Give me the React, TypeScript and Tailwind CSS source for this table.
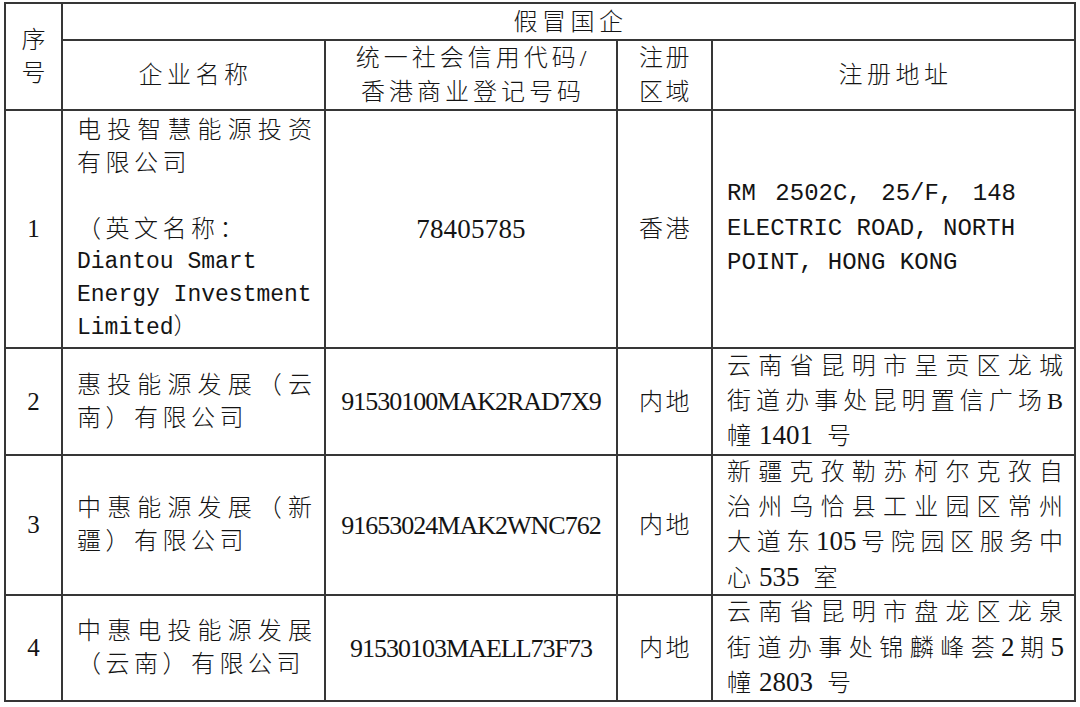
import React from "react";

const serif = "[font-family:'Liberation_Serif','Noto_Sans_CJK_SC',serif]";
const mono = "[font-family:'Liberation_Mono','Noto_Sans_CJK_SC',monospace]";
const cell = "border-r-2 border-b-2 border-[#363636]";
const J = "text-justify [text-align-last:justify]";

function D({ children }: { children: React.ReactNode }) {
  return <span className="text-[27px] tracking-normal">{children}</span>;
}

function NameCell({ children }: { children: React.ReactNode }) {
  return (
    <div className={`${cell} pl-[14px] pr-[12px] flex flex-col justify-center leading-[33px] text-[24px]`}>
      {children}
    </div>
  );
}

function AddrCell({ children }: { children: React.ReactNode }) {
  return (
    <div className={`${cell} pl-[14px] pr-[10px] flex flex-col justify-center leading-[34.5px] text-[24px] tracking-[1px]`}>
      {children}
    </div>
  );
}

function Center({ children, extra = "" }: { children: React.ReactNode; extra?: string }) {
  return (
    <div className={`${cell} flex flex-col items-center justify-center text-center ${extra}`}>
      {children}
    </div>
  );
}

export default function App() {
  return (
    <div className={`w-[1080px] h-[707px] bg-white text-[#141414] font-light pt-[2px] pl-[4px] ${serif}`}>
      <div className="grid w-[1072px] grid-cols-[57px_263px_292px_95px_363px] grid-rows-[37px_70px_238px_107px_140px_106px] border-l-2 border-t-2 border-[#363636]">
        {/* header */}
        <div className={`${cell} row-span-2 flex flex-col items-center justify-center text-[24px] leading-[33px]`}>
          <div>序</div>
          <div>号</div>
        </div>
        <div className={`${cell} col-span-4 flex items-center justify-center text-[24px] tracking-[4.5px] pl-[4px]`}>
          假冒国企
        </div>
        <Center extra="text-[24px] tracking-[4.5px] pl-[4px]">企业名称</Center>
        <Center extra="text-[24px] tracking-[4px] pl-[4px] leading-[34px]">
          <div>统一社会信用代码/</div>
          <div>香港商业登记号码</div>
        </Center>
        <Center extra="text-[24px] tracking-[2.5px] pl-[2px] leading-[34px]">
          <div>注册</div>
          <div>区域</div>
        </Center>
        <Center extra="text-[24px] tracking-[4.5px] pl-[4px]">注册地址</Center>

        {/* row 1 */}
        <Center extra="text-[25px]">1</Center>
        <NameCell>
          <div className={J}>电投智慧能源投资</div>
          <div className="tracking-[4.5px]">有限公司</div>
          <div className="h-[33px]"></div>
          <div className="tracking-[4.5px]">（英文名称：</div>
          <div className={`${mono} text-[23px]`}>Diantou Smart</div>
          <div className={`${mono} text-[23px]`}>Energy Investment</div>
          <div className={`${mono} text-[23px]`}>Limited）</div>
        </NameCell>
        <Center extra="text-[27px] tracking-[0.2px]">78405785</Center>
        <Center extra="text-[24px] tracking-[2.5px] pl-[2px]">香港</Center>
        <AddrCell>
          <div className={`${mono} w-[289px] tracking-normal ${J}`}>RM 2502C, 25/F, 148</div>
          <div className={`${mono} tracking-normal whitespace-pre`}>ELECTRIC ROAD, NORTH</div>
          <div className={`${mono} tracking-normal whitespace-pre`}>POINT, HONG KONG</div>
        </AddrCell>

        {/* row 2 */}
        <Center extra="text-[25px]">2</Center>
        <NameCell>
          <div className={J}>惠投能源发展（云</div>
          <div className="tracking-[4.5px]">南）有限公司</div>
        </NameCell>
        <Center extra="text-[26px] tracking-[-1px]">91530100MAK2RAD7X9</Center>
        <Center extra="text-[24px] tracking-[2.5px] pl-[2px]">内地</Center>
        <AddrCell>
          <div className={J}>云南省昆明市呈贡区龙城</div>
          <div className={J}>街道办事处昆明置信广场B</div>
          <div className="whitespace-pre">幢 <D>1401</D>  号</div>
        </AddrCell>

        {/* row 3 */}
        <Center extra="text-[25px]">3</Center>
        <NameCell>
          <div className={J}>中惠能源发展（新</div>
          <div className="tracking-[4.5px]">疆）有限公司</div>
        </NameCell>
        <Center extra="text-[26px] tracking-[-1px]">91653024MAK2WNC762</Center>
        <Center extra="text-[24px] tracking-[2.5px] pl-[2px]">内地</Center>
        <AddrCell>
          <div className={J}>新疆克孜勒苏柯尔克孜自</div>
          <div className={J}>治州乌恰县工业园区常州</div>
          <div className={J}>大道东<D>105</D>号院园区服务中</div>
          <div className="whitespace-pre">心 <D>535</D>  室</div>
        </AddrCell>

        {/* row 4 */}
        <Center extra="text-[25px]">4</Center>
        <NameCell>
          <div className={J}>中惠电投能源发展</div>
          <div className="tracking-[4.5px]">（云南）有限公司</div>
        </NameCell>
        <Center extra="text-[26px] tracking-[-1px]">91530103MAELL73F73</Center>
        <Center extra="text-[24px] tracking-[2.5px] pl-[2px]">内地</Center>
        <AddrCell>
          <div className={J}>云南省昆明市盘龙区龙泉</div>
          <div className={J}>街道办事处锦麟峰荟<D>2</D>期<D>5</D></div>
          <div className="whitespace-pre">幢 <D>2803</D>  号</div>
        </AddrCell>
      </div>
    </div>
  );
}
